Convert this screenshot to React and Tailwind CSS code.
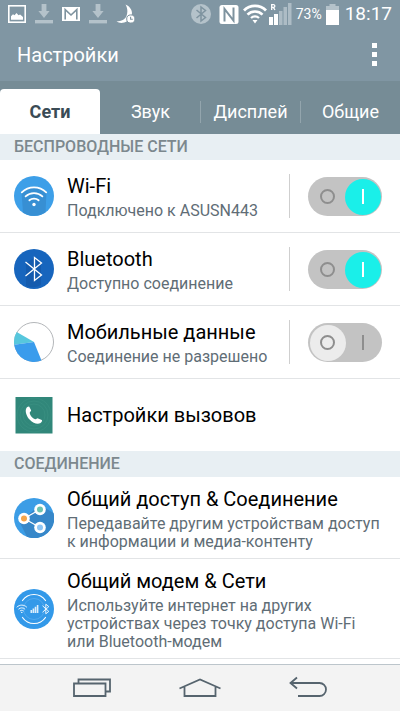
import { useState } from 'react'

const TABS = ['Сети', 'Звук', 'Дисплей', 'Общие']

/* ---------- status bar icons ---------- */

function PictureIcon() {
  return (
    <svg width="18" height="18" viewBox="0 0 18 18" fill="none" aria-hidden="true">
      <rect x="0.8" y="0.8" width="16.4" height="16.4" stroke="#fff" strokeWidth="1.6" />
      <path d="M3 14.8v-3.6l2-2 1.5 1 2-2.2 2 2.2 1.6-.8 2.9 2.6v2.8z" fill="#fff" />
    </svg>
  )
}

function DownloadIcon() {
  return (
    <svg width="18" height="20" viewBox="0 0 18 20" fill="#b4c2ca" aria-hidden="true">
      <path d="M6.6 0h4.8v7h3.2L9 14 3.4 7h3.2z" />
      <path d="M0 16h18v3.4H0z" />
    </svg>
  )
}

function MailIcon() {
  return (
    <svg width="18" height="14" viewBox="0 0 18 14" fill="none" aria-hidden="true">
      <rect width="18" height="14" fill="#fff" />
      <path d="M3.2 12.6V2.6L9 8l5.8-5.4v10" stroke="#7e939f" strokeWidth="1.6" />
    </svg>
  )
}

function MoonIcon() {
  return (
    <svg width="20" height="20" viewBox="0 0 20 20" aria-hidden="true">
      <path d="M9.5.5C15 3 17.5 8 15 13 12.5 18.5 5 20.5.5 17.5c5-.5 8.5-2 10-5.5C12 8 11.5 4 9.5.5z" fill="#fff" />
      <circle cx="14.8" cy="15" r="4.1" fill="#fff" stroke="#8095a1" strokeWidth="1" />
      <path d="M14.6 12.8v2.5h2.2" fill="none" stroke="#8095a1" strokeWidth="1.1" />
    </svg>
  )
}

function BluetoothBadge() {
  return (
    <svg width="20" height="20" viewBox="0 0 20 20" fill="none" aria-hidden="true">
      <circle cx="10" cy="10" r="10" fill="#b4c2ca" />
      <path d="M5.5 6l9 7.5L10 17V3l4.5 3.5-9 7.5" stroke="#7e939f" strokeWidth="1.5" />
    </svg>
  )
}

function NfcIcon() {
  return (
    <svg width="20" height="19" viewBox="0 0 20 19" fill="none" aria-hidden="true">
      <rect x="0.5" width="19" height="19" rx="2.5" fill="#fff" />
      <path d="M5.5 16.5V4l9 11.5V2.5" stroke="#7e939f" strokeWidth="2" />
    </svg>
  )
}

function WifiStatusIcon() {
  return (
    <svg width="24" height="20" viewBox="0 0 24 20" fill="none" stroke="#fff" aria-hidden="true">
      <path d="M1 6.5a15.5 15.5 0 0 1 22 0" strokeWidth="2.8" />
      <path d="M4.5 10.6a10.6 10.6 0 0 1 15 0" strokeWidth="2.6" />
      <path d="M8 14a5.7 5.7 0 0 1 8 0" strokeWidth="2.2" />
      <path d="M9.5 16h5L12 19.5z" fill="#fff" stroke="none" />
    </svg>
  )
}

function SignalIcon() {
  return (
    <svg width="23" height="22" viewBox="0 0 23 22" aria-hidden="true">
      <path d="M0 14h4v8H0zM5 11h4v11H5z" fill="#fff" />
      <path d="M10 8h3.5v14H10zM14.5 4H18v18h-3.5zM19 0h3.5v22H19z" fill="#adbcc5" />
      <path d="M2.7 7V1.7h1.8a1.3 1.3 0 0 1 0 2.7H2.7M4.3 4.4L6 7" fill="none" stroke="#fff" strokeWidth="1.3" />
    </svg>
  )
}

function BatteryIcon() {
  return (
    <svg width="13" height="21" viewBox="0 0 13 21" aria-hidden="true">
      <path d="M3.5 0h6v2H13v4.5H0V2h3.5z" fill="#b4c2ca" />
      <path d="M0 6h13v15H0z" fill="#fff" />
    </svg>
  )
}

/* ---------- list icons ---------- */

function WifiIcon() {
  return (
    <svg width="40" height="40" viewBox="0 0 40 40" fill="none" aria-hidden="true">
      <circle cx="20" cy="20" r="20" fill="#3d9fe8" />
      <path d="M7.5 16L9 36.5A20 20 0 0 0 31.5 36.3L32.5 16C25 9.5 15 9.5 7.5 16z" fill="#378fd3" />
      <g stroke="#fff" strokeWidth="1.8" strokeLinecap="round">
        <path d="M7.8 16.3C14.5 9.7 25.5 9.7 32.2 16.3" />
        <path d="M11.6 20.4C16.3 16 23.7 16 28.4 20.4" />
        <path d="M15.4 24.3c2.6-2.2 6.6-2.2 9.2 0" />
      </g>
      <circle cx="20" cy="28.5" r="1.7" fill="#fff" />
    </svg>
  )
}

function BluetoothIcon() {
  return (
    <svg width="40" height="40" viewBox="0 0 40 40" fill="none" aria-hidden="true">
      <circle cx="20" cy="20" r="20" fill="#1765bd" />
      <path d="M12 14l8-5 7 5v22a18 18 0 0 1-15 1z" fill="#145bae" />
      <path d="M11.5 13L27.5 26 20.5 31.5V8.5L27.5 14 11.5 27" stroke="#fff" strokeWidth="1.3" />
    </svg>
  )
}

function DataIcon() {
  return (
    <svg width="40" height="40" viewBox="0 0 40 40" aria-hidden="true">
      <circle cx="20" cy="20" r="19.5" fill="#fff" stroke="#b3b6b9" />
      <path d="M20 20L2.7 10A20 20 0 0 0 .2 22.8z" fill="#57c7dd" />
      <path d="M20 20L.2 22.8A20 20 0 0 0 27.5 38.5z" fill="#3a9cec" />
    </svg>
  )
}

function CallIcon() {
  return (
    <svg width="40" height="40" viewBox="0 0 40 40" fill="none" aria-hidden="true">
      <rect x="1.5" y="2" width="37" height="36.5" fill="#31877a" />
      <g stroke="#3b9182" strokeWidth="0.7">
        <circle cx="20" cy="20" r="11" />
        <circle cx="20" cy="20" r="14" />
        <circle cx="20" cy="20" r="17" />
      </g>
      <path d="M12.3 13.2c.8-1.3 2.2-2.1 3-1.5l1.8 3.6c.3.9-1.5 1.8-1.4 2.6.4 2.5 2.7 5.2 5.4 6.4 1 .4 2-1.3 3-.9l3.7 1.6c.8.6-.2 2.2-1.3 3-2.6 1.5-7.2.6-10.7-3.2-3.4-3.6-5-8.8-3.5-11.6z" fill="#fff" />
    </svg>
  )
}

function ShareIcon() {
  return (
    <svg width="40" height="40" viewBox="0 0 40 40" aria-hidden="true">
      <circle cx="20" cy="20" r="20" fill="#3c9de6" />
      <path d="M10 20L26 7l13.5 8A20 20 0 0 1 13 38.7L6 25z" fill="#3687c9" />
      <path d="M26 11.5L10 20.5 26 29.5" fill="none" stroke="#fff" strokeWidth="1.2" />
      <g fill="#fff">
        <circle cx="26" cy="11.5" r="5.8" />
        <circle cx="10" cy="20.5" r="5.8" />
        <circle cx="26" cy="29.5" r="5.8" />
      </g>
      <circle cx="26" cy="11.5" r="3" fill="#6cc3b0" />
      <circle cx="10" cy="20.5" r="3" fill="#f5a54a" />
      <circle cx="26" cy="29.5" r="3" fill="#8fc6f5" />
    </svg>
  )
}

function TetheringIcon() {
  return (
    <svg width="40" height="40" viewBox="0 0 40 40" fill="none" aria-hidden="true">
      <circle cx="20" cy="20" r="20" fill="#3399e9" />
      <circle cx="20" cy="20" r="10.5" stroke="#52a9ee" />
      <g stroke="#fff" strokeLinecap="round">
        <path d="M8.5 11.5a14 14 0 0 1 23 0" strokeWidth="1.2" />
        <path d="M8.5 28.5a14 14 0 0 0 23 0" strokeWidth="1.2" />
        <path d="M3 18c2.8-2.6 6.8-2.6 9.6 0M4.8 20c1.8-1.6 4.2-1.6 6 0M6.3 21.8c1-.8 2-.8 3 0" strokeWidth="0.9" />
        <path d="M28.8 17l6 5.4-3 2.4v-9.6l3 2.4-6 5.4" strokeWidth="0.9" />
      </g>
      <circle cx="7.8" cy="23.4" r="0.7" fill="#fff" />
      <path d="M16.5 21h1.6v3h-1.6zM18.6 19.5h1.6V24h-1.6zM20.7 17.8h1.6V24h-1.6zM22.8 16h1.6v8h-1.6z" fill="#dceefc" />
    </svg>
  )
}

/* ---------- pieces ---------- */

function StatusBar() {
  return (
    <div className="flex h-7 items-center justify-between px-2 text-white">
      <div className="flex items-center gap-[9px]">
        <PictureIcon />
        <DownloadIcon />
        <MailIcon />
        <DownloadIcon />
        <MoonIcon />
      </div>
      <div className="flex items-center">
        <BluetoothBadge />
        <span className="ml-2"><NfcIcon /></span>
        <span className="ml-1"><WifiStatusIcon /></span>
        <span className="ml-0.5"><SignalIcon /></span>
        <span className="ml-1 text-sm">73%</span>
        <span className="ml-1"><BatteryIcon /></span>
        <span className="ml-1.5 text-[19px]">18:17</span>
      </div>
    </div>
  )
}

function Switch({ label, defaultChecked }) {
  return (
    <label className="relative flex h-[39px] w-[74px] shrink-0 cursor-pointer items-center rounded-full bg-[#c3c3c3]">
      <input type="checkbox" role="switch" aria-label={label} defaultChecked={defaultChecked} className="peer sr-only" />
      <span className="absolute top-0.5 left-0.5 size-9 rounded-full bg-[#ececec] transition peer-checked:translate-x-[35px] peer-checked:bg-[#1aefe9]" />
      <span className="absolute left-3 size-[15px] rounded-full border-2 border-[#8e8e8e]" />
      <span className="absolute right-[18px] h-[15px] w-0.5 bg-[#8e8e8e] peer-checked:bg-white" />
    </label>
  )
}

function SectionTitle({ children }) {
  return (
    <h2 className="flex h-[26px] items-center bg-[#e8eff3] px-3.5 text-base font-medium text-[#7c888e]">
      {children}
    </h2>
  )
}

function Row({ icon, title, text, toggle, checked, tall }) {
  return (
    <li className="border-t border-[#e2e4e6] first:border-t-0">
      <div className={tall ? 'flex items-center gap-[13px] pt-2 pr-4 pb-[7px] pl-3.5' : 'flex h-[72px] items-center gap-[13px] pr-[18px] pl-3.5'}>
        <span className="shrink-0">{icon}</span>
        <div className="min-w-0 flex-1">
          <h3 className="text-xl leading-7 text-black">{title}</h3>
          {text && <p className="mt-0.5 text-base leading-[18px] text-[#5f6d76]">{text}</p>}
        </div>
        {toggle && (
          <div className="flex items-center gap-[18px]">
            <span className="h-11 w-px bg-[#cfcfcf]" />
            <Switch label={title} defaultChecked={checked} />
          </div>
        )}
      </div>
    </li>
  )
}

function NavBar() {
  return (
    <nav className="flex h-[47px] items-center justify-center gap-[66px] border-t border-[#bcc5cb] bg-[#f3f3f3]">
      <button type="button" aria-label="Недавние приложения">
        <svg width="42" height="24" viewBox="0 0 42 24" fill="none" stroke="#56646e" strokeWidth="1.8">
          <path d="M7.5 7V3.5H39v12h-4M3 7.5h31.5V20H3z" />
        </svg>
      </button>
      <button type="button" aria-label="Главный экран">
        <svg width="42" height="24" viewBox="0 0 42 24" fill="none" stroke="#56646e" strokeWidth="1.8">
          <path d="M.5 12.5L21 3.5l20.5 9M5.5 11v9h31v-9" />
        </svg>
      </button>
      <button type="button" aria-label="Назад">
        <svg width="42" height="24" viewBox="0 0 42 24" fill="none" stroke="#56646e" strokeWidth="1.8">
          <path d="M10 1.5L3.5 7l6.5 5.5M3.5 7H32.5a6.5 6.5 0 0 1 0 13H11" />
        </svg>
      </button>
    </nav>
  )
}

export default function App() {
  const [tab, setTab] = useState('Сети')

  return (
    <div className="flex min-h-screen flex-col bg-white font-[Roboto,sans-serif]">
      <header className="bg-[#8096a3]">
        <StatusBar />
        <div className="flex h-[53px] items-center justify-between pr-[18px] pl-[17px]">
          <h1 className="text-xl text-white">Настройки</h1>
          <button type="button" aria-label="Меню" className="flex w-4 flex-col items-center gap-1 py-1">
            <span className="size-[5px] bg-white" />
            <span className="size-[5px] bg-white" />
            <span className="size-[5px] bg-white" />
          </button>
        </div>
      </header>

      <div role="tablist" className="flex h-[53px] bg-[#768c96] pt-2">
        {TABS.map((name, i) => (
          <button
            key={name}
            type="button"
            role="tab"
            aria-selected={tab === name}
            onClick={() => setTab(name)}
            className={
              tab === name
                ? 'flex-1 rounded-t bg-white text-lg font-bold text-[#3a4b55]'
                : 'flex flex-1 items-center text-lg text-white'
            }
          >
            {tab !== name && <span className={i > 1 ? 'h-[22px] w-px bg-[#93a5ad]' : 'h-[22px] w-px'} />}
            <span className="flex-1">{name}</span>
          </button>
        ))}
      </div>

      <main className="flex-1">
        <SectionTitle>БЕСПРОВОДНЫЕ СЕТИ</SectionTitle>
        <ul>
          <Row icon={<WifiIcon />} title="Wi-Fi" text="Подключено к ASUSN443" toggle checked />
          <Row icon={<BluetoothIcon />} title="Bluetooth" text="Доступно соединение" toggle checked />
          <Row icon={<DataIcon />} title="Мобильные данные" text="Соединение не разрешено" toggle />
          <Row icon={<CallIcon />} title="Настройки вызовов" />
        </ul>
        <SectionTitle>СОЕДИНЕНИЕ</SectionTitle>
        <ul className="border-b border-[#e2e4e6]">
          <Row
            icon={<ShareIcon />}
            title="Общий доступ & Соединение"
            text="Передавайте другим устройствам доступ к информации и медиа-контенту"
            tall
          />
          <Row
            icon={<TetheringIcon />}
            title="Общий модем & Сети"
            text="Используйте интернет на других устройствах через точку доступа Wi-Fi или Bluetooth-модем"
            tall
          />
        </ul>
      </main>

      <NavBar />
    </div>
  )
}
